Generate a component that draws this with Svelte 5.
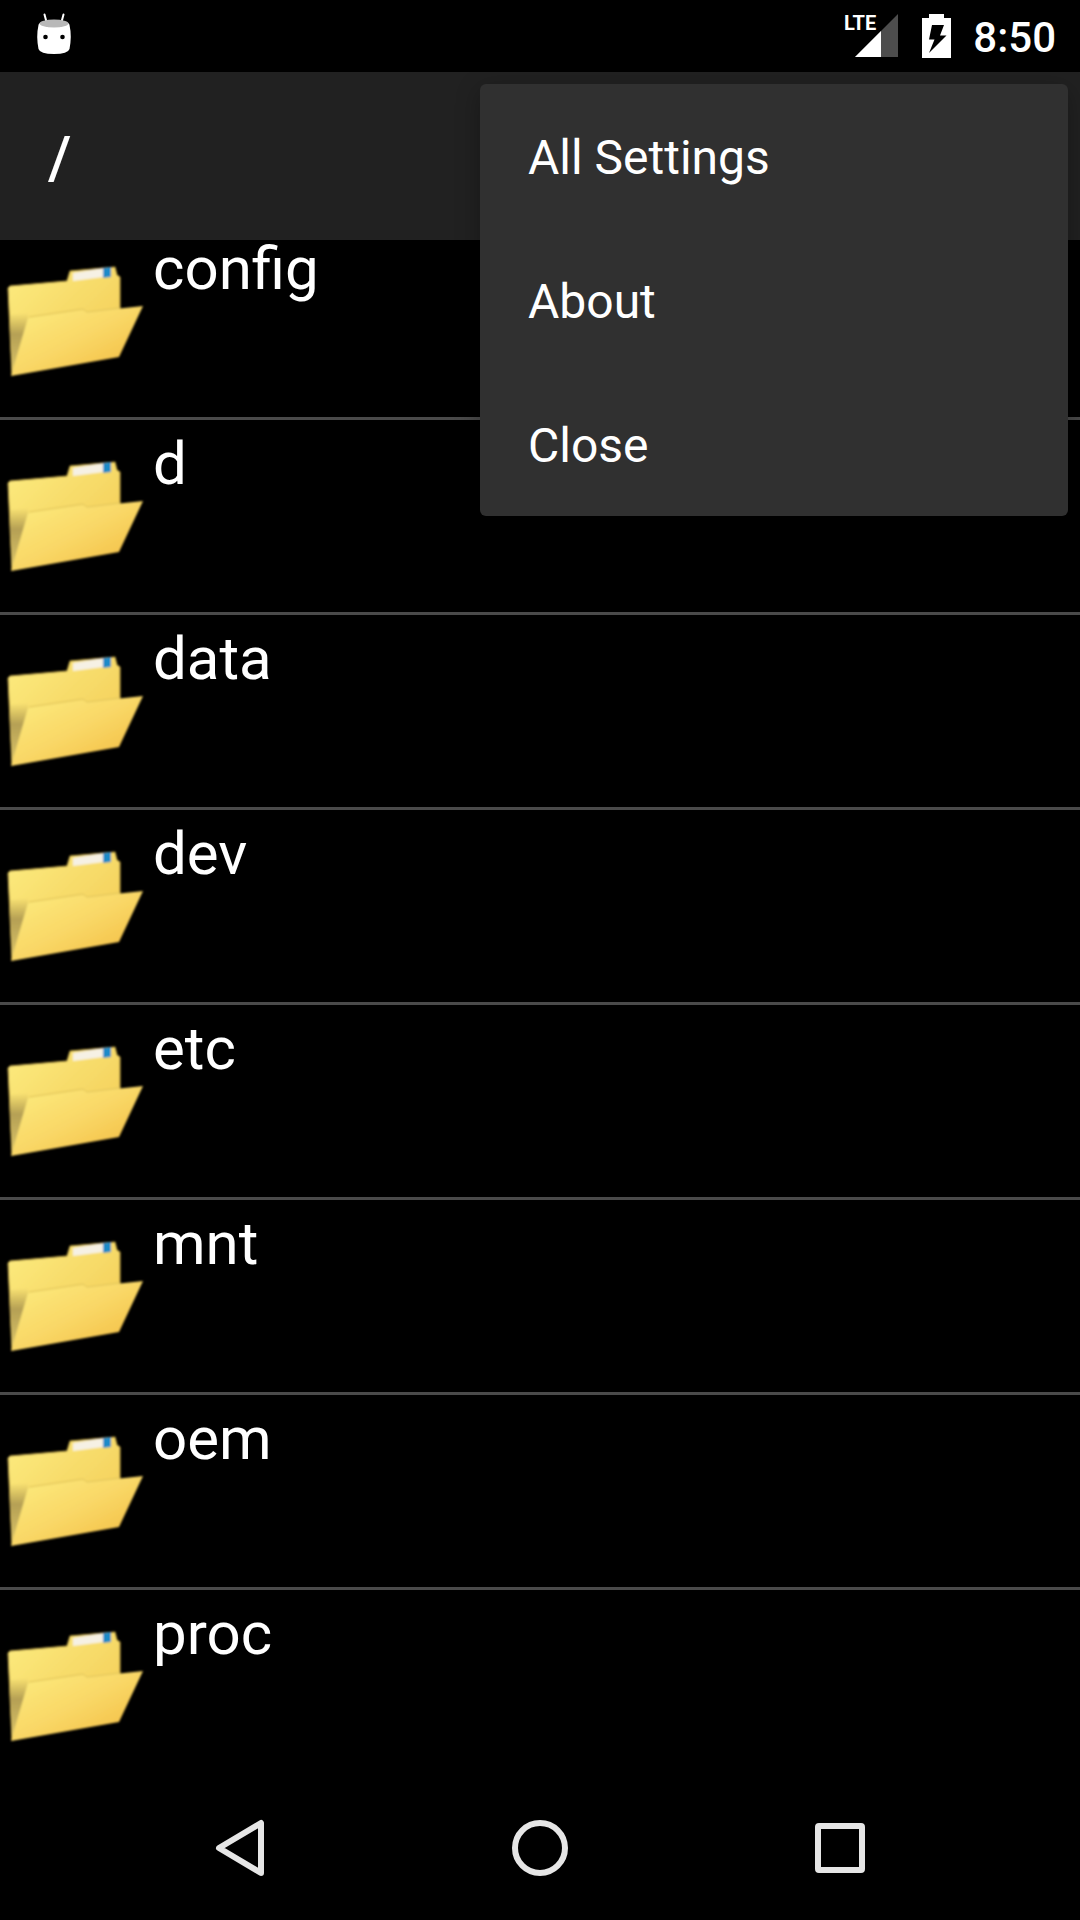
<script>
  const folders = ['config', 'd', 'data', 'dev', 'etc', 'mnt', 'oem', 'proc'];
  const actions = ['All Settings', 'About', 'Close'];
</script>

<svelte:head><title>File browser</title></svelte:head>

<div class="screen">
  <div class="status">
    <svg class="notice" width="36" height="42" viewBox="0 0 36 42" aria-hidden="true">
      <path d="M8.500 1.500 10.500 9M27.500 1.500 25.500 9" stroke="#fff" stroke-width="2" stroke-linecap="round" />
      <path d="M2.500 12Q3 8 18 8T33.500 12Q36 23 33.500 36Q32 41 18 41T2.500 36Q0 23 2.500 12Z" fill="#fff" />
      <ellipse cx="18" cy="10.500" rx="14.500" ry="4" fill="#b8b8b8" />
      <circle cx="9.500" cy="24" r="2.300" fill="#000" />
      <circle cx="26.500" cy="24" r="2.300" fill="#000" />
    </svg>
    <div class="indicators">
      <svg class="signal" width="56" height="44" viewBox="0 0 56 44" role="img" aria-label="LTE signal">
        <path d="M11 43 54 0V43Z" fill="#4d4d4d" />
        <path d="M11 43 37 17V43Z" fill="#fff" />
        <text class="lte" x="0" y="16">LTE</text>
      </svg>
      <svg width="29" height="44" viewBox="0 0 29 44" role="img" aria-label="Battery charging">
        <path d="M0 4H7V0H22V4H29V44H0Z" fill="#fff" />
        <path d="M10 11H22L18 21.500H24.500L7 39L12.500 25.500H7Z" fill="#000" />
      </svg>
      <time>8:50</time>
    </div>
  </div>

  <header>
    <h1>/</h1>
    <div class="menu" role="menu">
      {#each actions as action}
        <button role="menuitem">{action}</button>
      {/each}
    </div>
  </header>

  <main>
    <svg class="defs" aria-hidden="true">
      <defs>
        <linearGradient id="back" x1="0" y1="0" x2="1" y2="1">
          <stop offset="0" stop-color="#fcec80" />
          <stop offset="1" stop-color="#f2c850" />
        </linearGradient>
        <linearGradient id="front" x1="0" y1="0" x2="1" y2="1">
          <stop offset="0" stop-color="#fced80" />
          <stop offset="0.500" stop-color="#f9d766" />
          <stop offset="1" stop-color="#f3b93c" />
        </linearGradient>
        <linearGradient id="fold" x1="0" y1="0" x2="0" y2="1">
          <stop offset="0" stop-color="#b5a050" stop-opacity="0" />
          <stop offset="0.350" stop-color="#b5a055" />
          <stop offset="1" stop-color="#dcc568" />
        </linearGradient>
        <filter id="soft"><feGaussianBlur stdDeviation="1" /></filter>
        <symbol id="folder" viewBox="0 0 150 192">
          <g filter="url(#soft)">
            <path d="M8 63 10 61 67 56 70 46 115 42 117 50 120 52V100L12 150Z" fill="url(#back)" stroke="#b99c3e" stroke-width="1" />
            <path d="M73 48 104 43V52L73 56Z" fill="#f6f1e4" />
            <path d="M103 43 111 42V52L103 53Z" fill="#1f8ac8" />
            <path d="M9 90 28 88V94L12 149Z" fill="url(#fold)" />
            <path d="M28 93 83 85 87 87 143 81 119 132 11 151Z" fill="url(#front)" />
            <path d="M29 92 83 84 87 87 120 83" fill="none" stroke="#e0c45a" stroke-width="1" />
          </g>
        </symbol>
      </defs>
    </svg>
    <ul>
      {#each folders as folder}
        <li>
          <a href="#{folder}">
            <svg width="150" height="192" aria-hidden="true"><use href="#folder" /></svg>
            <span>{folder}</span>
          </a>
        </li>
      {/each}
    </ul>
  </main>

  <nav>
    <button aria-label="Back">
      <svg width="60" height="60" viewBox="0 0 60 60"><path d="M51 5V55L9 30Z" /></svg>
    </button>
    <button aria-label="Home">
      <svg width="60" height="60" viewBox="0 0 60 60"><circle cx="30" cy="30" r="25" /></svg>
    </button>
    <button aria-label="Overview">
      <svg width="60" height="60" viewBox="0 0 60 60"><rect x="8" y="8" width="44" height="44" rx="1" /></svg>
    </button>
  </nav>
</div>

<style>
  :global(body) {
    margin: 0;
    background: #000;
  }
  .screen {
    display: flex;
    flex-direction: column;
    height: 100vh;
    background: #000;
    color: #fff;
    font-family: Roboto, sans-serif;
  }
  svg {
    display: block;
    flex: none;
  }
  button {
    border: 0;
    padding: 0;
    background: none;
    color: inherit;
    font: inherit;
  }
  .status {
    display: flex;
    justify-content: space-between;
    align-items: center;
    flex: none;
    height: 72px;
    padding: 0 24px 0 36px;
  }
  .notice {
    margin-bottom: 4px;
  }
  .indicators {
    display: flex;
    align-items: center;
    gap: 22px;
  }
  .signal {
    overflow: visible;
  }
  .lte {
    font-size: 20px;
    font-weight: 700;
    fill: #fff;
  }
  time {
    padding-top: 4px;
    font-size: 42px;
    font-weight: 500;
    line-height: 48px;
  }
  header {
    position: relative;
    z-index: 1;
    display: flex;
    align-items: center;
    flex: none;
    height: 168px;
    padding: 0 48px;
    background: #212121;
  }
  h1 {
    margin: 0;
    padding-top: 4px;
    font-size: 60px;
    font-weight: 500;
    line-height: 72px;
  }
  .menu {
    position: absolute;
    top: 12px;
    right: 12px;
    display: flex;
    flex-direction: column;
    width: 588px;
    border-radius: 6px;
    background: #303030;
    box-shadow: 0 6px 24px rgba(0, 0, 0, 0.3);
  }
  .menu button {
    height: 144px;
    padding: 4px 48px 0;
    font-size: 48px;
    line-height: 56px;
    text-align: left;
  }
  main {
    flex: 1;
    min-height: 0;
    overflow: hidden;
  }
  .defs {
    position: absolute;
    width: 0;
    height: 0;
  }
  /* The list is resting slightly scrolled beneath the title bar. */
  ul {
    margin: -15px 0 0;
    padding: 0;
    list-style: none;
  }
  li {
    border-bottom: 3px solid #4a4a4a;
  }
  li a {
    display: flex;
    gap: 3px;
    color: inherit;
    text-decoration: none;
  }
  li span {
    padding-top: 15px;
    font-size: 60px;
    line-height: 58px;
  }
  nav {
    display: flex;
    flex: none;
    height: 144px;
    padding: 0 90px;
  }
  nav button {
    display: flex;
    flex: 1;
    align-items: center;
    justify-content: center;
  }
  nav svg {
    fill: none;
    stroke: #e6e6e6;
    stroke-width: 6px;
    stroke-linejoin: round;
  }
</style>
